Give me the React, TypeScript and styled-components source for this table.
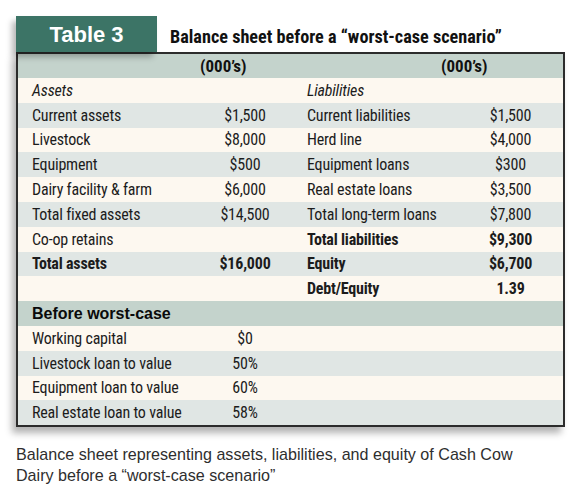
import React from "react";
import styled, { createGlobalStyle } from "styled-components";

const GlobalStyle = createGlobalStyle`
  html, body { margin: 0; padding: 0; background: #ffffff; }
  body { font-family: "Roboto Condensed", "Liberation Sans", sans-serif; }
`;

const Page = styled.div`
  width: 575px;
  height: 499px;
  padding: 16px 0 0 16px;
  box-sizing: border-box;
  background: #fff;
`;

const Figure = styled.div`
  width: 549px;
`;

const TitleBar = styled.div`
  display: flex;
  align-items: flex-end;
  height: 36px;
`;

const Tab = styled.div`
  width: 141px;
  height: 36px;
  background: #3c7466;
  color: #ffffff;
  display: flex;
  align-items: center;
  justify-content: center;
  font-family: "Liberation Sans", Arial, sans-serif;
  font-weight: 700;
  font-size: 22px;
  box-shadow: -4px 5px 6px rgba(0, 0, 0, 0.28);
  padding-top: 1px;
  box-sizing: border-box;
`;

const Title = styled.div`
  margin-left: 13px;
  padding-bottom: 5px;
  font-family: "Roboto Condensed", sans-serif;
  font-weight: 700;
  font-size: 18.2px;
  line-height: 20px;
  color: #111;
`;

const Table = styled.div`
  border: 2px solid #2c2c2c;
  background: #fdf8f0;
  box-shadow: -4px 6px 7px rgba(0, 0, 0, 0.3);
`;

type Tone = "band" | "cream" | "gray";
const tones: Record<Tone, string> = {
  band: "#c4d3cc",
  cream: "#fdf8f0",
  gray: "#e0e6e4",
};

const Row = styled.div<{ $tone: Tone; $h?: number }>`
  display: grid;
  grid-template-columns: 182px 90px 168px 105px;
  align-items: center;
  height: ${(p) => p.$h ?? 24.8}px;
  background: ${(p) => tones[p.$tone]};
  color: #1c1c1c;
  font-size: 16px;
  letter-spacing: -0.2px;
`;

const Label = styled.div<{ $bold?: boolean; $italic?: boolean; $first?: boolean }>`
  padding-left: ${(p) => (p.$first ? 14 : 17)}px;
  font-weight: ${(p) => (p.$bold ? 700 : 400)};
  font-style: ${(p) => (p.$italic ? "italic" : "normal")};
  white-space: nowrap;
`;

const Value = styled.div<{ $bold?: boolean }>`
  text-align: center;
  font-weight: ${(p) => (p.$bold ? 700 : 400)};
  white-space: nowrap;
`;

const HeadCell = styled.div<{ $shift?: number }>`
  justify-self: start;
  margin-left: ${(p) => p.$shift ?? 0}px;
  font-weight: 700;
  font-size: 17px;
  letter-spacing: 0;
  color: #111;
`;

const SectionTitle = styled.div`
  grid-column: 1 / -1;
  padding-left: 14px;
  font-family: "Liberation Sans", Arial, sans-serif;
  font-weight: 700;
  font-size: 16px;
  letter-spacing: 0;
  color: #0a0a0a;
`;

const Caption = styled.p`
  margin: 17px 0 0 0;
  width: 520px;
  font-family: "Liberation Sans", Arial, sans-serif;
  font-size: 16.1px;
  line-height: 21px;
  color: #2e2e2e;
`;

type Cell = { text?: string; bold?: boolean; italic?: boolean };
type Line = { tone: Tone; a?: Cell; av?: Cell; l?: Cell; lv?: Cell };

const rows: Line[] = [
  { tone: "cream", a: { text: "Assets", italic: true }, l: { text: "Liabilities", italic: true } },
  { tone: "gray", a: { text: "Current assets" }, av: { text: "$1,500" }, l: { text: "Current liabilities" }, lv: { text: "$1,500" } },
  { tone: "cream", a: { text: "Livestock" }, av: { text: "$8,000" }, l: { text: "Herd line" }, lv: { text: "$4,000" } },
  { tone: "gray", a: { text: "Equipment" }, av: { text: "$500" }, l: { text: "Equipment loans" }, lv: { text: "$300" } },
  { tone: "cream", a: { text: "Dairy facility & farm" }, av: { text: "$6,000" }, l: { text: "Real estate loans" }, lv: { text: "$3,500" } },
  { tone: "gray", a: { text: "Total fixed assets" }, av: { text: "$14,500" }, l: { text: "Total long-term loans" }, lv: { text: "$7,800" } },
  { tone: "cream", a: { text: "Co-op retains" }, l: { text: "Total liabilities", bold: true }, lv: { text: "$9,300", bold: true } },
  { tone: "gray", a: { text: "Total assets", bold: true }, av: { text: "$16,000", bold: true }, l: { text: "Equity", bold: true }, lv: { text: "$6,700", bold: true } },
  { tone: "cream", l: { text: "Debt/Equity", bold: true }, lv: { text: "1.39", bold: true } },
];

const ratios: Line[] = [
  { tone: "cream", a: { text: "Working capital" }, av: { text: "$0" } },
  { tone: "gray", a: { text: "Livestock loan to value" }, av: { text: "50%" } },
  { tone: "cream", a: { text: "Equipment loan to value" }, av: { text: "60%" } },
  { tone: "gray", a: { text: "Real estate loan to value" }, av: { text: "58%" } },
];

function DataRow({ line }: { line: Line }) {
  return (
    <Row $tone={line.tone}>
      <Label $first $bold={line.a?.bold} $italic={line.a?.italic}>
        {line.a?.text}
      </Label>
      <Value $bold={line.av?.bold}>{line.av?.text}</Value>
      <Label $bold={line.l?.bold} $italic={line.l?.italic}>
        {line.l?.text}
      </Label>
      <Value $bold={line.lv?.bold}>{line.lv?.text}</Value>
    </Row>
  );
}

export default function App() {
  return (
    <>
      <GlobalStyle />
      <Page>
        <Figure>
          <TitleBar>
            <Tab>Table 3</Tab>
            <Title>Balance sheet before a “worst-case scenario”</Title>
          </TitleBar>
          <Table>
            <Row $tone="band" $h={24}>
              <div />
              <HeadCell>(000’s)</HeadCell>
              <div />
              <HeadCell $shift={-17}>(000’s)</HeadCell>
            </Row>
            {rows.map((r, i) => (
              <DataRow key={i} line={r} />
            ))}
            <Row $tone="band">
              <SectionTitle>Before worst-case</SectionTitle>
            </Row>
            {ratios.map((r, i) => (
              <DataRow key={"r" + i} line={r} />
            ))}
          </Table>
          <Caption>
            Balance sheet representing assets, liabilities, and equity of Cash Cow Dairy before a
            “worst-case scenario”
          </Caption>
        </Figure>
      </Page>
    </>
  );
}
